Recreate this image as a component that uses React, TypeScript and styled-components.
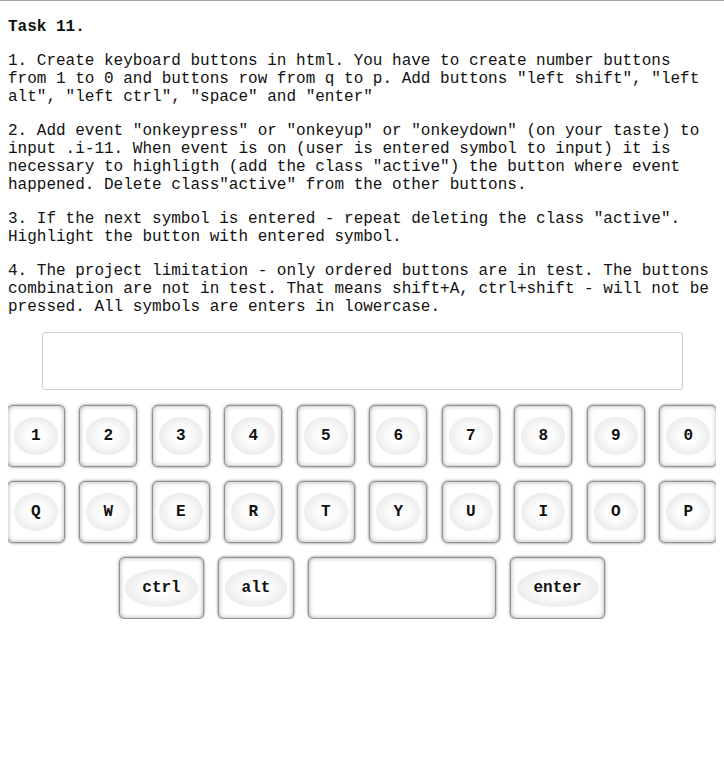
import React from "react";
import styled, { createGlobalStyle } from "styled-components";

const Global = createGlobalStyle`
  html {
    background: linear-gradient(#a3a3a3, #a3a3a3) top left / 100% 1px no-repeat, #fff;
  }
  body {
    margin: 0 8px 8px;
    font-family: "Liberation Mono", "Courier New", monospace;
    font-size: 16px;
    color: #111;
  }
`;

const Page = styled.div`
  display: flow-root;
  padding-top: 2px;
`;

const Text = styled.p<{ $bold?: boolean }>`
  margin: 16px 0;
  font-weight: ${(p) => (p.$bold ? "bold" : "normal")};
  line-height: 18px;
`;

const InputRow = styled.div`
  display: flex;
  justify-content: center;
`;

const Field = styled.input`
  width: 641px;
  height: 58px;
  box-sizing: border-box;
  border: 1px solid #cfcfcf;
  border-radius: 3px;
  background: #fff;
  outline: none;
`;

const Keyboard = styled.div`
  display: flex;
  flex-direction: column;
  gap: 14px;
  margin-top: 15px;
`;

const Row = styled.div<{ $gap: number }>`
  display: flex;
  justify-content: center;
  gap: ${(p) => p.$gap}px;
`;

const Key = styled.div<{ $width?: number }>`
  box-sizing: border-box;
  height: 62px;
  ${(p) => (p.$width ? `width: ${p.$width}px;` : "")}
  flex-shrink: 0;
  display: flex;
  align-items: center;
  justify-content: center;
  padding: 0 6px;
  border: 1px solid #929292;
  border-radius: 6px;
  background: #fff;
  box-shadow: 0 0 3px rgba(0, 0, 0, 0.55), inset 0 0 5px rgba(0, 0, 0, 0.3);
`;

const Cap = styled.button`
  border: none;
  margin: 0;
  height: 38px;
  padding: 0 17px;
  border-radius: 50%;
  font-family: "Liberation Mono", "Courier New", monospace;
  font-size: 16px;
  font-weight: bold;
  line-height: 18px;
  color: #111;
  background: radial-gradient(ellipse at center, #ffffff 0%, #fbfbfb 35%, #e0e0e0 100%);
  cursor: pointer;
`;

const numbers = ["1", "2", "3", "4", "5", "6", "7", "8", "9", "0"];
const letters = ["Q", "W", "E", "R", "T", "Y", "U", "I", "O", "P"];

export default function App() {
  return (
    <Page>
      <Global />
      <Text $bold>Task 11.</Text>
      <Text>
        1. Create keyboard buttons in html. You have to create number buttons
        <br />
        from 1 to 0 and buttons row from q to p. Add buttons "left shift", "left
        <br />
        alt", "left ctrl", "space" and "enter"
      </Text>
      <Text>
        2. Add event "onkeypress" or "onkeyup" or "onkeydown" (on your taste) to
        <br />
        input .i-11. When event is on (user is entered symbol to input) it is
        <br />
        necessary to highligth (add the class "active") the button where event
        <br />
        happened. Delete class"active" from the other buttons.
      </Text>
      <Text>
        3. If the next symbol is entered - repeat deleting the class "active".
        <br />
        Highlight the button with entered symbol.
      </Text>
      <Text>
        4. The project limitation - only ordered buttons are in test. The buttons
        <br />
        combination are not in test. That means shift+A, ctrl+shift - will not be
        <br />
        pressed. All symbols are enters in lowercase.
      </Text>
      <InputRow>
        <Field className="i-11" type="text" />
      </InputRow>
      <Keyboard>
        <Row $gap={14.5}>
          {numbers.map((n) => (
            <Key key={n} $width={58}>
              <Cap>{n}</Cap>
            </Key>
          ))}
        </Row>
        <Row $gap={14.5}>
          {letters.map((l) => (
            <Key key={l} $width={58}>
              <Cap>{l}</Cap>
            </Key>
          ))}
        </Row>
        <Row $gap={14}>
          <Key $width={85}>
            <Cap>ctrl</Cap>
          </Key>
          <Key $width={76}>
            <Cap>alt</Cap>
          </Key>
          <Key $width={188} />
          <Key $width={95}>
            <Cap>enter</Cap>
          </Key>
        </Row>
      </Keyboard>
    </Page>
  );
}
